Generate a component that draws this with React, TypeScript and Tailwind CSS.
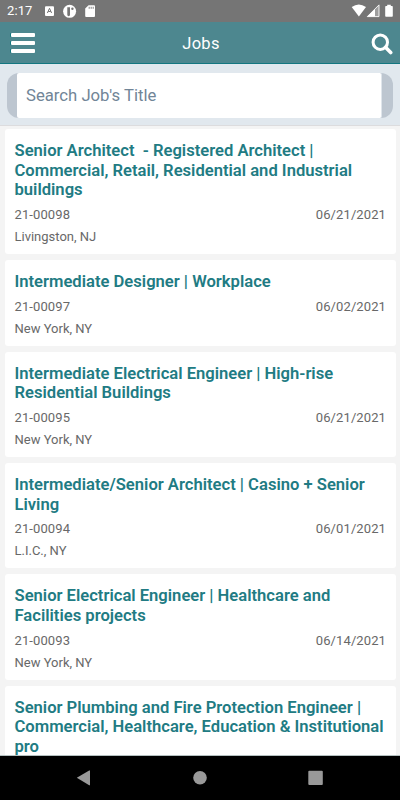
import React from "react";

type Job = { title: string[]; id?: string; date?: string; city?: string };

const jobs: Job[] = [
  {
    title: ["Senior Architect\u00a0 - Registered Architect |", "Commercial, Retail, Residential and Industrial", "buildings"],
    id: "21-00098",
    date: "06/21/2021",
    city: "Livingston, NJ",
  },
  { title: ["Intermediate Designer | Workplace"], id: "21-00097", date: "06/02/2021", city: "New York, NY" },
  {
    title: ["Intermediate Electrical Engineer | High-rise", "Residential Buildings"],
    id: "21-00095",
    date: "06/21/2021",
    city: "New York, NY",
  },
  {
    title: ["Intermediate/Senior Architect | Casino + Senior", "Living"],
    id: "21-00094",
    date: "06/01/2021",
    city: "L.I.C., NY",
  },
  {
    title: ["Senior Electrical Engineer | Healthcare and", "Facilities projects"],
    id: "21-00093",
    date: "06/14/2021",
    city: "New York, NY",
  },
  {
    title: ["Senior Plumbing and Fire Protection Engineer |", "Commercial, Healthcare, Education & Institutional", "pro"],
  },
];

function StatusBar() {
  return (
    <div className="flex h-[22px] shrink-0 items-center bg-[#757575] pr-[7px] pl-[7px] text-white">
      <span className="w-[38px] text-[13px] leading-[22px] tracking-[0.1px]">2:17</span>
      <svg className="h-[22px] w-[52px]" viewBox="45 0 52 22" fill="currentColor">
        <rect x="45" y="6.3" width="9" height="9.7" rx="1" />
        <path d="M47.4 13 49.5 8.3 51.6 13M48.2 11.5h2.6" fill="none" stroke="#757575" strokeWidth="1" />
        <circle cx="69.6" cy="11.3" r="6.5" />
        <path d="M67.3 14.8V7.2h2.7v7.6a1.35 1.35 0 0 1-2.7 0z" fill="#757575" />
        <circle cx="72.4" cy="8.8" r="1.2" fill="#757575" />
        <path d="M88.6 5.2h5.4a1 1 0 0 1 1 1v9.8a1 1 0 0 1-1 1h-7.8a1 1 0 0 1-1-1V8.6z" />
        <path d="M89.2 6.8v2M91.2 6.8v2M93.2 6.8v2" stroke="#757575" strokeWidth=".9" />
      </svg>
      <svg className="ml-auto h-[22px] w-[42px]" viewBox="351 0 42 22" fill="currentColor">
        <path d="M351.7 7.1Q358.8 1.8 366 7.1L358.9 16.4z" />
        <path d="M379 4.9v11.7h-11.7z" opacity=".3" />
        <path d="M375 8.9v7.7h-7.7z" />
        <path d="M367.3 16.6 379 4.9v11.7z" fill="none" stroke="currentColor" strokeWidth=".9" />
        <path d="M387.2 4.7h3.6v1.2h1.2a.8.8 0 0 1 .8.8v9.2a.8.8 0 0 1-.8.8h-6a.8.8 0 0 1-.8-.8V6.7a.8.8 0 0 1 .8-.8h1.2z" />
      </svg>
    </div>
  );
}

function Header() {
  return (
    <header className="flex h-[42px] shrink-0 items-center justify-between border-b border-[#137780] bg-[#4d878f] pr-[7px] pl-[11px] text-white">
      <div className="flex w-6 flex-col gap-1">
        <span className="h-1 rounded-[1px] bg-white shadow-[-1px_0_0_#137780]" />
        <span className="h-1 rounded-[1px] bg-white shadow-[-1px_0_0_#137780]" />
        <span className="h-1 rounded-[1px] bg-white shadow-[-1px_0_0_#137780]" />
      </div>
      <h1 className="mt-[3px] mr-1 text-[16.5px] leading-5 tracking-[0.3px]">Jobs</h1>
      <svg className="mt-0.5 h-[22px] w-[22px]" viewBox="0 0 22 22" fill="none" stroke="white">
        <circle cx="9.3" cy="9.2" r="7.2" strokeWidth="3" />
        <path d="m14.5 14.3 5.2 5.2" strokeWidth="3.6" strokeLinecap="round" />
      </svg>
    </header>
  );
}

function SearchBar() {
  return (
    <div className="h-[62px] shrink-0 border-b border-[#dcdcde] bg-[#e1e8ee] px-[7px] pt-[9px]">
      <div className="h-[45px] rounded-[12px] bg-[#bdc6d0] pr-[11px] pl-[10px]">
        <div className="h-full rounded-[2px] border-r border-[#dfe5eb] bg-white pl-[9px] text-[16.7px] leading-[45px] text-[#718597]">
          Search Job's Title
        </div>
      </div>
    </div>
  );
}

function JobCard({ job }: { job: Job }) {
  return (
    <article className="shrink-0 rounded-[3px] bg-white px-[10px] pt-[12px] pb-[6px] pl-[9.5px]">
      <h2 className="text-[16.6px] leading-[19.65px] font-semibold whitespace-nowrap text-[#217b83]">
        {job.title.map((line) => (
          <span key={line} className="block">
            {line}
          </span>
        ))}
      </h2>
      {job.id && (
        <div className="mt-[4px] text-[13px] leading-[22px] text-[#686868]">
          <div className="flex justify-between tracking-[0.1px]">
            <span>{job.id}</span>
            <span>{job.date}</span>
          </div>
          <div>{job.city}</div>
        </div>
      )}
    </article>
  );
}

export default function App() {
  return (
    <div className="flex h-[800px] w-[400px] flex-col overflow-hidden bg-[#f4f4f4] font-['Roboto',sans-serif]">
      <StatusBar />
      <Header />
      <SearchBar />
      <main className="flex min-h-0 flex-1 flex-col gap-[6px] overflow-hidden border-b border-[#b4c0c0] px-[5px] pt-[3px] pr-[4px]">
        {jobs.map((job) => (
          <JobCard key={job.title[0]} job={job} />
        ))}
      </main>
      <nav className="h-11 shrink-0 bg-black">
        <svg className="h-11 w-[400px]" viewBox="0 0 400 44" fill="#999">
          <path d="M76.8 21.8 89.2 14.5h.8v14.7h-.8z" />
          <circle cx="200" cy="21.8" r="6.8" />
          <rect x="308.3" y="14.7" width="14.5" height="14.2" rx="1" />
        </svg>
      </nav>
    </div>
  );
}
